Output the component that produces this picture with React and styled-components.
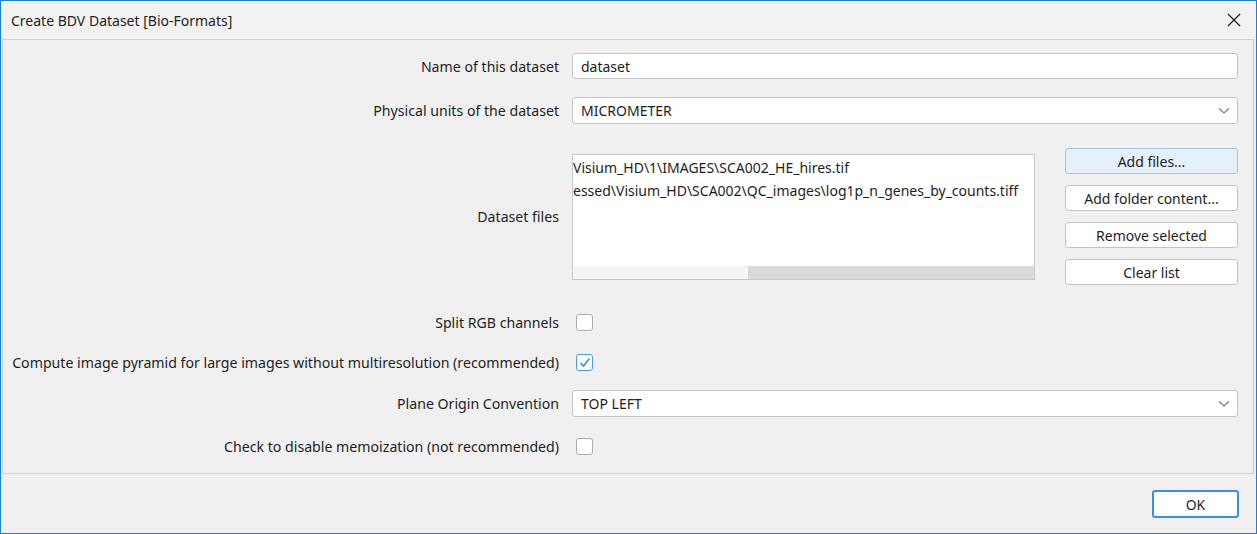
import React from "react";
import styled, { createGlobalStyle } from "styled-components";

const GlobalStyle = createGlobalStyle`
  html, body {
    margin: 0;
    padding: 0;
    background: #f0f0f0;
  }
  body {
    font-family: "Noto Sans", "Open Sans", sans-serif;
    font-size: 14px;
    color: #1e1e1e;
  }
`;

const Window = styled.div`
  width: 1257px;
  height: 534px;
  box-sizing: border-box;
  border: 1px solid #1b7fd5;
  background: #f0f0f0;
  display: flex;
  flex-direction: column;
`;

const TitleBar = styled.div`
  height: 38px;
  flex: none;
  display: flex;
  align-items: center;
  justify-content: space-between;
  padding: 0 14px 0 10px;
  background: #f2f2f2;
`;

const Title = styled.div`
  font-size: 14px;
  color: #222;
`;

const CloseButton = styled.div`
  width: 16px;
  height: 16px;
  display: flex;
  align-items: center;
  justify-content: center;
`;

const Panel = styled.div`
  margin: 0 2px 0 1px;
  height: 435px;
  flex: none;
  box-sizing: border-box;
  border: 1px solid #d2d2d2;
  border-right-color: #c9c9c9;
  padding: 13px 15px 0 8px;
  display: flex;
  flex-direction: column;
`;

const Row = styled.div`
  display: flex;
  align-items: ${(p) => (p.$top ? "flex-start" : "center")};
  margin-top: ${(p) => p.$mt || 0}px;
  min-height: 26px;
`;

const Label = styled.div`
  width: 548px;
  flex: none;
  text-align: right;
  margin-right: 13px;
  white-space: nowrap;
  align-self: center;
  font-size: 14.15px;
`;

const TextInput = styled.div`
  flex: 1;
  height: 26px;
  box-sizing: border-box;
  background: #fff;
  border: 1px solid #c4c4c4;
  border-radius: 3px;
  padding: 0 8px;
  display: flex;
  align-items: center;
`;

const Select = styled(TextInput)`
  justify-content: space-between;
  padding-right: 7px;
  height: 27px;
`;

const FilesArea = styled.div`
  flex: 1;
  display: flex;
  align-items: flex-start;
`;

const ListBox = styled.div`
  width: 463px;
  height: 126px;
  margin-top: 6px;
  box-sizing: border-box;
  background: #fff;
  border: 1px solid #c8c8c8;
  display: flex;
  flex-direction: column;
  overflow: hidden;
`;

const ListItems = styled.div`
  flex: 1;
  padding: 1px 0 0 0;
`;

const ListItem = styled.div`
  height: 23px;
  line-height: 23px;
  white-space: nowrap;
`;

const HScroll = styled.div`
  height: 13px;
  background: #f5f5f5;
  display: flex;
  justify-content: flex-end;
`;

const Thumb = styled.div`
  width: 286px;
  background: #d9d9d9;
`;

const ButtonColumn = styled.div`
  margin-left: 30px;
  flex: 1;
  display: flex;
  flex-direction: column;
  gap: 11px;
`;

const Button = styled.div`
  height: 26px;
  box-sizing: border-box;
  border: 1px solid ${(p) => (p.$focused ? "#a9c6e8" : "#c4c4c4")};
  background: ${(p) => (p.$focused ? "#e6f0fa" : "#fff")};
  border-radius: 3px;
  display: flex;
  align-items: center;
  justify-content: center;
`;

const Check = styled.div`
  width: 17px;
  height: 17px;
  margin-left: 4px;
  box-sizing: border-box;
  background: #fff;
  border: 1px solid ${(p) => (p.$checked ? "#4a9ae4" : "#acacac")};
  border-radius: 3px;
  display: flex;
  align-items: center;
  justify-content: center;
`;

const Footer = styled.div`
  flex: 1;
  display: flex;
  justify-content: flex-end;
  align-items: flex-start;
  padding: 16px 17px 0 0;
`;

const OkButton = styled.div`
  width: 87px;
  height: 28px;
  box-sizing: border-box;
  border: 2px solid #3d8ee0;
  border-radius: 3px;
  background: #fff;
  display: flex;
  align-items: center;
  justify-content: center;
`;

const Chevron = () => (
  <svg width="12" height="8" viewBox="0 0 12 8">
    <path d="M1 1.5 L6 6 L11 1.5" fill="none" stroke="#7a7a7a" strokeWidth="1.2" />
  </svg>
);

const Tick = () => (
  <svg width="12" height="11" viewBox="0 0 12 11">
    <path d="M1.5 6 L4.5 9 L10.5 1.5" fill="none" stroke="#3b8ee0" strokeWidth="1.6" />
  </svg>
);

export default function App() {
  return (
    <>
      <GlobalStyle />
      <Window>
        <TitleBar>
          <Title>Create BDV Dataset [Bio-Formats]</Title>
          <CloseButton>
            <svg width="14" height="14" viewBox="0 0 14 14">
              <path d="M1 1 L13 13 M13 1 L1 13" stroke="#222" strokeWidth="1.3" />
            </svg>
          </CloseButton>
        </TitleBar>
        <Panel>
          <Row>
            <Label>Name of this dataset</Label>
            <TextInput>dataset</TextInput>
          </Row>
          <Row $mt={18}>
            <Label>Physical units of the dataset</Label>
            <Select>
              MICROMETER
              <Chevron />
            </Select>
          </Row>
          <Row $mt={24} $top>
            <Label>Dataset files</Label>
            <FilesArea>
              <ListBox>
                <ListItems>
                  <ListItem>Visium_HD\1\IMAGES\SCA002_HE_hires.tif</ListItem>
                  <ListItem>essed\Visium_HD\SCA002\QC_images\log1p_n_genes_by_counts.tiff</ListItem>
                </ListItems>
                <HScroll>
                  <Thumb />
                </HScroll>
              </ListBox>
              <ButtonColumn>
                <Button $focused>Add files...</Button>
                <Button>Add folder content...</Button>
                <Button>Remove selected</Button>
                <Button>Clear list</Button>
              </ButtonColumn>
            </FilesArea>
          </Row>
          <Row $mt={24}>
            <Label>Split RGB channels</Label>
            <Check />
          </Row>
          <Row $mt={14}>
            <Label>Compute image pyramid for large images without multiresolution (recommended)</Label>
            <Check $checked>
              <Tick />
            </Check>
          </Row>
          <Row $mt={15}>
            <Label>Plane Origin Convention</Label>
            <Select>
              TOP LEFT
              <Chevron />
            </Select>
          </Row>
          <Row $mt={16}>
            <Label>Check to disable memoization (not recommended)</Label>
            <Check />
          </Row>
        </Panel>
        <Footer>
          <OkButton>OK</OkButton>
        </Footer>
      </Window>
    </>
  );
}
